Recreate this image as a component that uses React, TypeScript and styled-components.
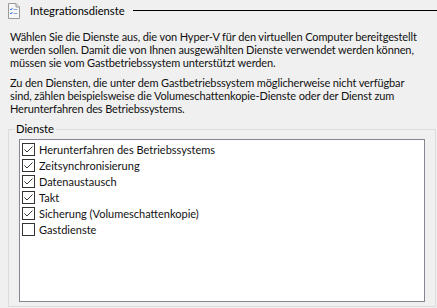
import React from "react";
import styled, { createGlobalStyle } from "styled-components";

const Global = createGlobalStyle`
  html, body { margin: 0; padding: 0; background: #f0f0f0; }
  body { font-family: Lato, "Liberation Sans", sans-serif; font-size: 11px; color: #000; }
`;

const FONT = `Lato, "Liberation Sans", sans-serif`;

const Page = styled.div`
  width: 437px;
  height: 308px;
  overflow: hidden;
  background: #f0f0f0;
  display: flex;
  flex-direction: column;
  box-sizing: border-box;
  padding: 2px 1px 1px 8px;
`;

const Header = styled.div`
  display: flex;
  align-items: center;
  height: 17px;
  margin-right: -1px;
`;

const HeaderTitle = styled.span`
  margin-left: 10px;
  white-space: nowrap;
  font-family: ${FONT};
  font-size: 11.2px;
`;

const HeaderRule = styled.div`
  flex: 1;
  height: 1px;
  background: #000;
  margin-left: 8px;
`;

const Para = styled.p<{ $top: number }>`
  margin: ${(p) => p.$top}px 0 0 2px;
  line-height: 13px;
  font-size: 11px;
  letter-spacing: -0.12px;
  font-family: ${FONT};
  white-space: nowrap;
  color: #111;
`;

const Group = styled.fieldset`
  margin: 8px 0 0 0;
  padding: 0 10px 4px 10px;
  border: 1px solid #dcdcdc;
  border-radius: 0;
  flex: 1;
  min-height: 0;
  display: flex;
  flex-direction: column;
`;

const Legend = styled.legend`
  padding: 0 2px;
  margin-left: -5px;
  font-family: ${FONT};
  font-size: 11.2px;
  line-height: 12px;
`;

const List = styled.div`
  margin-top: 4px;
  background: #fff;
  border: 1px solid #828790;
  flex: 1;
  padding: 1px 2px;
  display: flex;
  flex-direction: column;
`;

const Row = styled.label`
  display: flex;
  align-items: center;
  height: 16px;
  gap: 4px;
  font-family: ${FONT};
  font-size: 11px;
  white-space: nowrap;
  color: #111;
`;

const Box = styled.span`
  width: 11px;
  height: 11px;
  border: 1px solid #333;
  background: #fff;
  display: inline-flex;
  align-items: center;
  justify-content: center;
  flex: none;
`;

const DocIcon = () => (
  <svg width="12" height="16" viewBox="0 0 12 16">
    <path d="M0.5 0.5 H8 L11.5 4 V15.5 H0.5 Z" fill="#f6f6f6" stroke="#9a9a9a" />
    <path d="M8 0.5 V4 H11.5" fill="#e0e0e0" stroke="#9a9a9a" />
    <path d="M2 6 L3 7 L4.5 5" fill="none" stroke="#3a7bd5" strokeWidth="1" />
    <rect x="5.5" y="6" width="4" height="1" fill="#8aa8d0" />
    <path d="M2 10 L3 11 L4.5 9" fill="none" stroke="#3a7bd5" strokeWidth="1" />
    <rect x="5.5" y="10" width="4" height="1" fill="#8aa8d0" />
  </svg>
);

const Check = () => (
  <svg width="11" height="11" viewBox="0 0 11 11">
    <path d="M1.5 5.5 L4 8 L9.5 2.5" fill="none" stroke="#333" strokeWidth="1" />
  </svg>
);

const items: [string, boolean][] = [
  ["Herunterfahren des Betriebssystems", true],
  ["Zeitsynchronisierung", true],
  ["Datenaustausch", true],
  ["Takt", true],
  ["Sicherung (Volumeschattenkopie)", true],
  ["Gastdienste", false],
];

export default function App() {
  return (
    <>
      <Global />
      <Page>
        <Header>
          <DocIcon />
          <HeaderTitle>Integrationsdienste</HeaderTitle>
          <HeaderRule />
        </Header>
        <Para $top={11}>
          Wählen Sie die Dienste aus, die von Hyper-V für den virtuellen Computer bereitgestellt
          <br />
          werden sollen. Damit die von Ihnen ausgewählten Dienste verwendet werden können,
          <br />
          müssen sie vom Gastbetriebssystem unterstützt werden.
        </Para>
        <Para $top={7}>
          Zu den Diensten, die unter dem Gastbetriebssystem möglicherweise nicht verfügbar
          <br />
          sind, zählen beispielsweise die Volumeschattenkopie-Dienste oder der Dienst zum
          <br />
          Herunterfahren des Betriebssystems.
        </Para>
        <Group>
          <Legend>Dienste</Legend>
          <List>
            {items.map(([t, c]) => (
              <Row key={t}>
                <Box>{c && <Check />}</Box>
                {t}
              </Row>
            ))}
          </List>
        </Group>
      </Page>
    </>
  );
}
